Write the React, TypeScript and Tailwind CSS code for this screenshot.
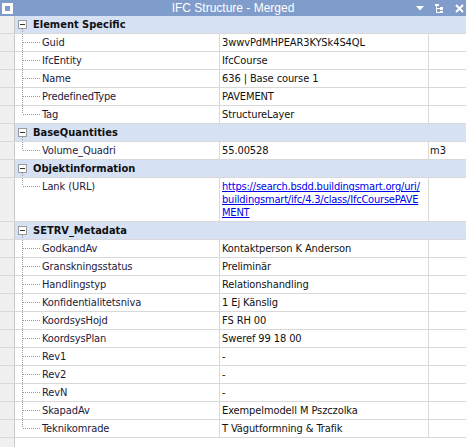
import React from "react";

type Prop = { name: string; value?: string; unit?: string; link?: string[] };
type Group = { title: string; props: Prop[] };

const groups: Group[] = [
  {
    title: "Element Specific",
    props: [
      { name: "Guid", value: "3wwvPdMHPEAR3KYSk4S4QL" },
      { name: "IfcEntity", value: "IfcCourse" },
      { name: "Name", value: "636 | Base course 1" },
      { name: "PredefinedType", value: "PAVEMENT" },
      { name: "Tag", value: "StructureLayer" },
    ],
  },
  {
    title: "BaseQuantities",
    props: [{ name: "Volume_Quadri", value: "55.00528", unit: "m3" }],
  },
  {
    title: "Objektinformation",
    props: [
      {
        name: "Lank (URL)",
        link: [
          "https://search.bsdd.buildingsmart.org/uri/",
          "buildingsmart/ifc/4.3/class/IfcCoursePAVE",
          "MENT",
        ],
      },
    ],
  },
  {
    title: "SETRV_Metadata",
    props: [
      { name: "GodkandAv", value: "Kontaktperson K Anderson" },
      { name: "Granskningsstatus", value: "Preliminär" },
      { name: "Handlingstyp", value: "Relationshandling" },
      { name: "Konfidentialitetsniva", value: "1 Ej Känslig" },
      { name: "KoordsysHojd", value: "FS RH 00" },
      { name: "KoordsysPlan", value: "Sweref 99 18 00" },
      { name: "Rev1", value: "-" },
      { name: "Rev2", value: "-" },
      { name: "RevN", value: "-" },
      { name: "SkapadAv", value: "Exempelmodell M Pszczolka" },
      { name: "Teknikomrade", value: "T Vägutformning & Trafik" },
    ],
  },
];

function Gutter() {
  return <div className="w-[15px] shrink-0 self-stretch border-r border-[#c9c9c9] bg-[#f0f0f0]" />;
}

function TreeLines({ last, tall, center }: { last: boolean; tall: boolean; center: number }) {
  const h = tall ? 43 : 17;
  return (
    <svg width="27" height={h} className="block">
      <line
        x1="7.5"
        y1="0"
        x2="7.5"
        y2={last ? center : h}
        stroke="#9a9a9a"
        strokeWidth="1"
        strokeDasharray="1 1"
      />
      <line
        x1="8"
        y1={center + 0.5}
        x2="26"
        y2={center + 0.5}
        stroke="#9a9a9a"
        strokeWidth="1"
        strokeDasharray="1 1"
      />
    </svg>
  );
}

function HeaderRow({ title }: { title: string }) {
  return (
    <div className="flex h-[18px] border-b border-[#d9d9d9] bg-[#d6e2f3]">
      <Gutter />
      <svg width="18" height="17" className="block shrink-0">
        <rect x="3.5" y="4.5" width="8" height="8" fill="#ffffff" stroke="#9a9a9a" />
        <line x1="5" y1="8.5" x2="10" y2="8.5" stroke="#333333" />
        <line x1="7.5" y1="13" x2="7.5" y2="17" stroke="#9a9a9a" strokeDasharray="1 1" />
      </svg>
      <div className="text-[11px] font-bold leading-[17px] text-[#101010] whitespace-nowrap">{title}</div>
    </div>
  );
}

function PropRow({ p, last }: { p: Prop; last: boolean }) {
  const tall = !!p.link;
  return (
    <div className={`flex border-b border-[#d9d9d9] ${tall ? "h-[44px]" : "h-[18px]"}`}>
      <Gutter />
      <div className="w-[27px] shrink-0">
        <TreeLines last={last} tall={tall} center={8} />
      </div>
      <div
        className={`w-[178px] shrink-0 border-r border-[#d9d9d9] text-[11px] tracking-[-0.1px] text-[#1a1a3c] whitespace-nowrap ${
          tall ? "leading-[13px] pt-[2px]" : "leading-[17px]"
        }`}
      >
        {p.name}
      </div>
      <div
        className={`w-[209px] shrink-0 border-r border-[#d9d9d9] pl-[2px] text-[11px] tracking-[-0.1px] text-[#111111] whitespace-nowrap ${
          tall ? "leading-[13px] pt-[2px]" : "leading-[17px]"
        }`}
      >
        {p.link ? (
          <a className="text-[#0000ee] underline tracking-[-0.2px]" href="#">
            {p.link[0]}
            <br />
            {p.link[1]}
            <br />
            {p.link[2]}
          </a>
        ) : (
          p.value
        )}
      </div>
      <div className="flex-1 pl-[1px] text-[11px] leading-[17px] text-[#111111]">{p.unit ?? ""}</div>
    </div>
  );
}

export default function App() {
  return (
    <div
      className="flex h-[447px] w-[466px] flex-col overflow-hidden bg-white"
      style={{ fontFamily: '"DejaVu Sans Condensed", "DejaVu Sans", sans-serif' }}
    >
      <div className="relative flex h-[16px] shrink-0 items-center justify-center bg-[#7f9cca]">
        <svg width="11" height="11" className="absolute left-[2px] top-[3px]">
          <rect x="0" y="0" width="11" height="11" fill="#ffffff" />
          <rect x="3" y="3" width="5" height="5" fill="#7f9cca" />
        </svg>
        <span
          className="text-[12px] leading-[16px] text-white"
          style={{ fontFamily: '"Liberation Sans", sans-serif' }}
        >
          IFC Structure - Merged
        </span>
        <div className="absolute right-[2px] top-0 flex h-[16px] items-center gap-[11px]">
          <svg width="8" height="5">
            <polygon points="0,0 8,0 4,4.5" fill="#ffffff" />
          </svg>
          <svg width="9" height="9">
            <rect x="0" y="0" width="4" height="2" fill="#ffffff" />
            <rect x="1" y="0" width="1" height="9" fill="#ffffff" />
            <rect x="1" y="4" width="4" height="1" fill="#ffffff" />
            <rect x="5" y="3" width="3" height="3" fill="#ffffff" />
            <rect x="1" y="8" width="4" height="1" fill="#ffffff" />
            <rect x="5" y="7" width="3" height="2" fill="#ffffff" />
          </svg>
          <svg width="9" height="9">
            <path d="M1 1 L8 8 M8 1 L1 8" stroke="#ffffff" strokeWidth="2" />
          </svg>
        </div>
      </div>
      {groups.map((g) => (
        <React.Fragment key={g.title}>
          <HeaderRow title={g.title} />
          {g.props.map((p, i) => (
            <PropRow key={p.name} p={p} last={i === g.props.length - 1} />
          ))}
        </React.Fragment>
      ))}
      <div className="flex flex-1">
        <Gutter />
      </div>
    </div>
  );
}
